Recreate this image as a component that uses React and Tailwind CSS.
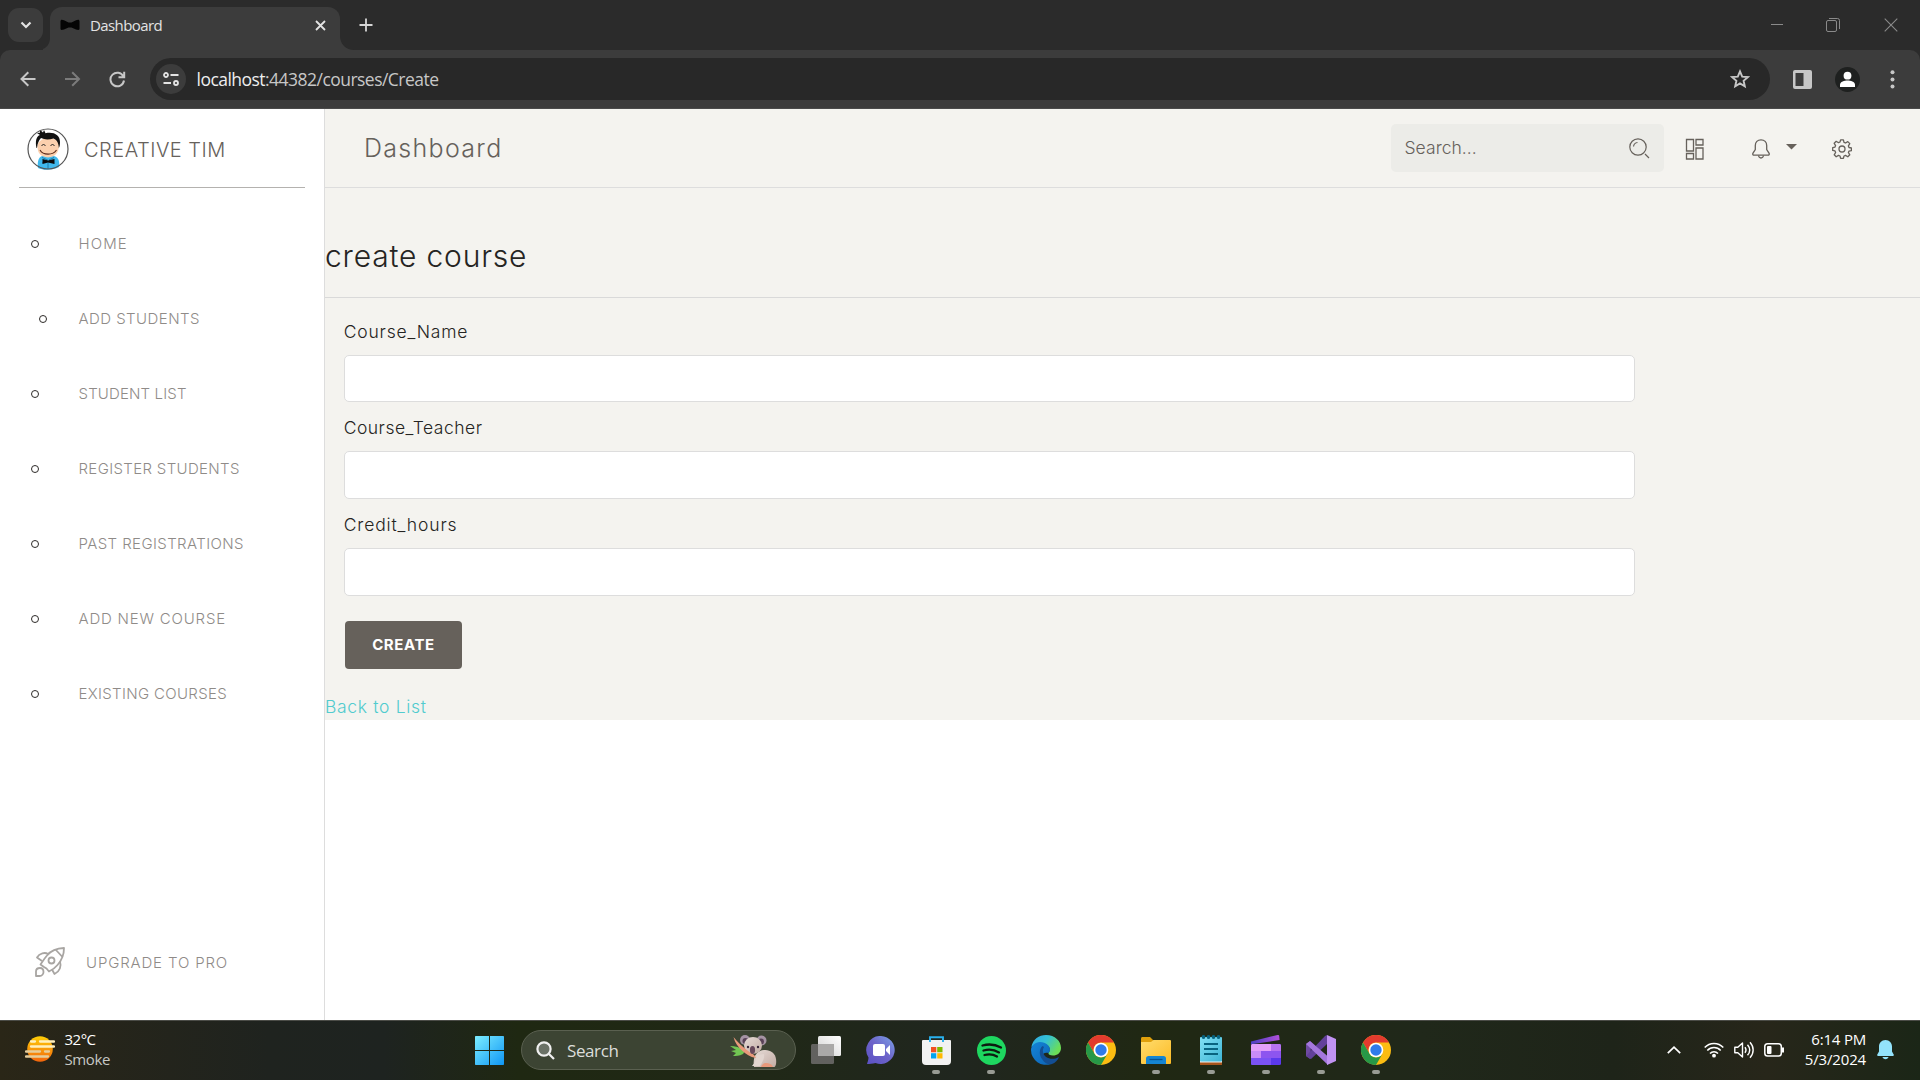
import React from 'react';

const menu = [
  { label: 'HOME', pad: 'pl-[31px]', gap: 'w-[47.500px]', spacing: 'tracking-[1.100px]' },
  { label: 'ADD STUDENTS', pad: 'pl-[39px]', gap: 'w-[39.500px]', spacing: 'tracking-[0.450px]' },
  { label: 'STUDENT LIST', pad: 'pl-[31px]', gap: 'w-[47.500px]', spacing: 'tracking-[0.150px]' },
  { label: 'REGISTER STUDENTS', pad: 'pl-[31px]', gap: 'w-[47.500px]', spacing: 'tracking-[0.350px]' },
  { label: 'PAST REGISTRATIONS', pad: 'pl-[31px]', gap: 'w-[47.500px]', spacing: 'tracking-[0.400px]' },
  { label: 'ADD NEW COURSE', pad: 'pl-[31px]', gap: 'w-[47.500px]', spacing: 'tracking-[0.800px]' },
  { label: 'EXISTING COURSES', pad: 'pl-[31px]', gap: 'w-[47.500px]', spacing: 'tracking-[0.330px]' },
];

const fields = [
  { label: 'Course_Name', spacing: 'tracking-[0.800px]' },
  { label: 'Course_Teacher', spacing: 'tracking-[0.480px]' },
  { label: 'Credit_hours', spacing: 'tracking-[0.850px]' },
];

function TabStrip() {
  return (
    <div className="flex h-[50px] bg-[#2b2b2b] pl-2">
      <button className="mt-2 flex h-[34px] w-[35px] items-center justify-center rounded-[11px] bg-[#3c3c3c]">
        <svg width="12" height="8" viewBox="0 0 12 8" fill="none" stroke="#e3e3e3" strokeWidth="2.2"><path d="M1.500 1.500 6 6l4.500-4.500" /></svg>
      </button>
      <div className="flex items-end">
        <svg width="7" height="12" viewBox="0 0 7 12"><path d="M7 0v12H-5C2 12 7 7 7 0Z" fill="#3c3c3c" /></svg>
      </div>
      <div className="mt-[7px] flex h-[43px] w-[290px] items-center rounded-t-[12px] bg-[#3c3c3c] pb-[7px] pl-[10px]">
        <svg width="20" height="12" viewBox="0 0 20 12"><path d="M.5 2.500C.5.500 2 .5 4 1.300L8.500 3.500h3L16 1.300c2-.8 3.500-.8 3.500 1.200v7c0 2-1.500 1.500-3.500.9L11.500 8.500h-3L4 10.400c-2 .6-3.500 1.100-3.500-.9Z" fill="#050505" /></svg>
        <span className="ml-[10px] text-[15px] leading-5 tracking-[-0.6px] text-[#e3e3e3]">Dashboard</span>
        <svg className="ml-auto mr-[14px]" width="11" height="11" viewBox="0 0 11 11" stroke="#e3e3e3" strokeWidth="1.8"><path d="m1 1 9 9M10 1l-9 9" /></svg>
      </div>
      <div className="flex items-end">
        <svg width="14" height="14" viewBox="0 0 14 14"><path d="M0 0v14h14C6 14 0 8 0 0Z" fill="#3c3c3c" /></svg>
      </div>
      <svg className="ml-[5px] mt-[18px]" width="14" height="14" viewBox="0 0 14 14" stroke="#d6d6d6" strokeWidth="1.8"><path d="M7 .5v13M.5 7h13" /></svg>
      <div className="ml-auto flex h-[50px] items-center pr-[22px]">
        <svg width="14" height="14" viewBox="0 0 14 14" stroke="#8a8a8a"><path d="M1 6.500h12" /></svg>
        <svg className="ml-[42px]" width="14" height="14" viewBox="0 0 14 14" fill="none" stroke="#8a8a8a"><rect x=".5" y="2.500" width="10" height="11" rx="1.500" /><path d="M3 .5h8.500a2 2 0 0 1 2 2V11" /></svg>
        <svg className="ml-[44px]" width="14" height="14" viewBox="0 0 14 14" stroke="#8a8a8a" strokeWidth="1.100"><path d="m.7.7 12.600 12.600M13.300.7.7 13.300" /></svg>
      </div>
    </div>
  );
}

function AddressBar() {
  return (
    <div className="bg-[#2b2b2b]">
      <div className="flex h-[59px] items-center rounded-t-[10px] border-b border-[#4a4a4a] bg-[#3c3c3c]">
        <svg className="ml-[19.500px]" width="16" height="16" viewBox="0 0 16 16" fill="none" stroke="#c7c7c7" strokeWidth="2"><path d="M15.500 8H2M8.300 1.200 1.500 8l6.800 6.800" /></svg>
        <svg className="ml-[29px]" width="16" height="16" viewBox="0 0 16 16" fill="none" stroke="#7b7b7b" strokeWidth="2"><path d="M0 8h13.500M7.200 1.200 14 8l-6.800 6.800" /></svg>
        <svg className="ml-[28.500px]" width="17" height="17" viewBox="0 0 17 17" fill="none" stroke="#c7c7c7" strokeWidth="2"><path d="M14.400 5.500A6.800 6.800 0 1 0 15 9.500M15.200.8v5.400H9.500" /></svg>
        <div className="ml-[24px] flex h-[42px] w-[1620px] items-center rounded-full bg-[#282828] pl-[6px]">
          <div className="flex h-[30px] w-[30px] items-center justify-center rounded-full bg-[#3c3c3c]">
            <svg width="16" height="14" viewBox="0 0 16 14" fill="none" stroke="#e3e3e3" strokeWidth="1.800"><circle cx="3" cy="3" r="2" /><path d="M7.500 3H15.500M.5 11H8" /><circle cx="13" cy="11" r="2" /></svg>
          </div>
          <span className="ml-[10.500px] whitespace-nowrap pb-px text-[17.500px] leading-6 tracking-[-0.530px] text-[#c7c7c7]"><span className="text-[#eeeeee]">localhost</span>:44382/courses/Create</span>
          <svg className="ml-auto mr-[20px]" width="20" height="20" viewBox="0 0 20 20" fill="none" stroke="#c7c7c7" strokeWidth="1.900"><path d="m10 2.400 2.200 5.200 5.600.5-4.200 3.700 1.200 5.500-4.800-2.900-4.800 2.900 1.200-5.500L2.200 8.100l5.600-.5Z" /></svg>
        </div>
        <svg className="ml-[23px]" width="19" height="19" viewBox="0 0 19 19"><rect width="19" height="19" rx="2" fill="#c7c7c7" /><path d="M2.500 3h8v13h-8Z" fill="#3c3c3c" /></svg>
        <svg className="ml-[23px]" width="25" height="25" viewBox="0 0 25 25"><circle cx="12.500" cy="12.500" r="12.500" fill="#1e201f" /><circle cx="12.500" cy="8.700" r="3.900" fill="#fff" /><path d="M5 20v-2.200c0-3 4.500-4.300 7.500-4.300s7.500 1.300 7.500 4.300V20Z" fill="#fff" /></svg>
        <svg className="ml-[30px]" width="5" height="19" viewBox="0 0 5 19" fill="#c7c7c7"><circle cx="2.500" cy="2.300" r="2" /><circle cx="2.500" cy="9.500" r="2" /><circle cx="2.500" cy="16.600" r="2" /></svg>
      </div>
    </div>
  );
}

function Avatar() {
  return (
    <svg width="42" height="42" viewBox="0 0 42 42">
      <circle cx="21" cy="21" r="20" fill="#fff" />
      <path d="M11 40c-1-7 1-11 4-12h12c4 1 6 5 5 11-6 3-15 4-21 1Z" fill="#3fb9ee" />
      <path d="M15 29.500 20.500 32 15 35M27 29.500 22 32l5 3" stroke="#1c6b95" strokeWidth=".8" fill="none" />
      <path d="M21 33v8" stroke="#1c6b95" strokeWidth=".8" />
      <path d="M10.500 17c-.5 7 2.500 12 10.500 12.500C29.500 29 32.500 23 32 15 30 9 13 8 10.500 17Z" fill="#fbd0ae" />
      <path d="M9.500 20C8 13 9.500 8 13 7l-3-2 3-.3L13 2l3 2.500L17 2l1.500 3.200C27 3.500 33 7 33 14c0 3-.4 5-1.200 6 0-4-1.500-8-5.300-9.500-5 1.300-9 1.200-12.500-.5-2 2-3.500 5-4 10Z" fill="#111" />
      <path d="m14.500 18 2-2 2 2M23.500 18l2-2 2 2" stroke="#222" fill="none" />
      <path d="M13 22c3 5.500 13 5.500 16.500 0" stroke="#5b2a1a" strokeWidth="1.100" fill="none" />
      <path d="M15.500 31 21 32.500l6.500-1.500v5L21 34.500 15.500 36Z" fill="#0a0a0a" />
      <circle cx="21" cy="21" r="20" fill="none" stroke="#555" strokeWidth="1.200" />
    </svg>
  );
}

function Rocket() {
  return (
    <svg width="30" height="30" viewBox="0 0 30 30" fill="none" stroke="#a8a5a2" strokeWidth="1.800" strokeLinejoin="round">
      <path d="M29 1c-8 .3-13 2.500-17 7.500C9 12 7 15.500 5.500 17.500L9 20l2.500 1.500L14 24.500c3.500-1.500 6-3.500 8.500-6.500C27 13 29 8 29 1Z" />
      <path d="M20.500 2.500 27.500 10M13 7C10 5 4.500 6 2 10.500l5 3.500M25 14.500c1.500 4.500 0 10-5.500 12.500l-2.500-4.500" />
      <circle cx="16.500" cy="13.500" r="3" />
      <path d="M1 29v-4.500c0-2.500 2-3.500 4-3.500 2.500 0 3.500 2 3.500 4S7 29 4.500 29Z" />
    </svg>
  );
}

function Sidebar() {
  return (
    <aside className="flex h-full w-[325px] flex-col border-r border-[#dddddd] bg-white font-['Inter',sans-serif] font-light">
      <div className="ml-[19px] mr-[19px] flex h-[79px] items-center border-b border-[#b4b2af] pl-[8px] pt-px">
        <Avatar />
        <span className="ml-[15px] whitespace-nowrap pt-[3px] text-[20px] leading-6 tracking-[0.500px] text-[#66615b]">CREATIVE TIM</span>
      </div>
      <nav className="mt-[17px]">
        {menu.map((m) => (
          <a key={m.label} className={'flex h-[75px] items-center ' + m.pad}>
            <span className={m.gap}><span className="mt-[2px] block h-[8px] w-[8px] rounded-full border-[1.500px] border-[#2d2a28]" /></span>
            <span className={'whitespace-nowrap pt-[3px] text-[15px] leading-5 text-[#8f8b88] ' + m.spacing}>{m.label}</span>
          </a>
        ))}
      </nav>
      <a className="mb-[43px] ml-[35px] mt-auto flex h-[30px] items-center">
        <Rocket />
        <span className="ml-[21px] whitespace-nowrap pt-px text-[15px] leading-5 tracking-[0.850px] text-[#8f8b88]">UPGRADE TO PRO</span>
      </a>
    </aside>
  );
}

function Navbar() {
  return (
    <header className="flex h-[79px] items-center border-b border-[#dddddd]">
      <h1 className="ml-[39px] text-[25px] font-light leading-8 tracking-[1.300px] text-[#66615b]">Dashboard</h1>
      <div className="ml-auto flex h-[48px] w-[273px] items-center rounded-[5px] bg-[#ecece8] pl-[13.500px]">
        <span className="pb-px text-[17.500px] font-light leading-6 tracking-[0.050px] text-[#66615b]">Search...</span>
        <svg className="ml-auto mr-[14px]" width="21" height="21" viewBox="0 0 21 21" fill="none" stroke="#66615b" strokeWidth="1.200"><circle cx="9" cy="9" r="8.200" /><path d="m16 16 4 4M4.500 8.500c.3-2.200 1.800-3.700 4-4" /></svg>
      </div>
      <svg className="ml-[21px] mt-px" width="20" height="22" viewBox="0 0 20 22" fill="none" stroke="#66615b" strokeWidth="1.300"><path d="M1.500 1.500h7V13h-7ZM11 1.500h7V7h-7ZM1.500 15.500h7V21h-7ZM11 10h7v11h-7Z" /></svg>
      <svg className="ml-[47px] mt-[2px]" width="18" height="20" viewBox="0 0 18 20" fill="none" stroke="#66615b" strokeWidth="1.300"><path d="M9 .8C5.500.8 3.300 3 3.300 6.500v4L1 14.200c-.6 1 0 2 1 2h14c1 0 1.600-1 1-2l-2.300-3.700v-4C14.700 3 12.500.8 9 .8Z" /><path d="M6.500 16.500c.3 1.600 1.200 2.500 2.500 2.500s2.200-.9 2.500-2.500" /></svg>
      <svg className="mb-[3px] ml-[16px]" width="11" height="6" viewBox="0 0 11 6"><path d="M0 0h11L5.500 5.500Z" fill="#66615b" /></svg>
      <svg className="ml-[35px] mr-[68px] mt-[2px]" width="20" height="20" viewBox="-10 -10 20 20" fill="none" stroke="#66615b" strokeWidth="1.300" strokeLinejoin="round">
        <circle r="3" />
        <path d="M-1.400-9.200h2.800L2-6.700l1.500.7 2.300-1.400 2 2-1.400 2.300.6 1.600 2.400.5v2.600l-2.400.5L6.400 3.500l1.400 2.300-2 2L3.500 6.400 2 7l-.6 2.300h-2.800L-2 7l-1.500-.6-2.300 1.400-2-2 1.400-2.300L-7 1.900l-2.300-.5v-2.800L-7-1.900l.6-1.500-1.400-2.300 2-2L-3.500-6.300-2-7Z" />
      </svg>
    </header>
  );
}

function CourseForm() {
  return (
    <section className="flex h-[532px] flex-col font-light">
      <h2 className="mt-[48px] text-[30px] leading-10 tracking-[0.820px] text-[#252422]">create course</h2>
      <hr className="mt-[21px] border-t border-[#d9d9d9]" />
      <form className="ml-[18.750px] mt-[22px]">
        {fields.map((f) => (
          <label key={f.label} className="block h-[96.600px]">
            <span className={'block pt-[1.500px] text-[17.500px] leading-5 text-[#252422] ' + f.spacing}>{f.label}</span>
            <input className="mt-[13.400px] block h-[47.600px] w-[1291px] rounded-[5px] border border-[#dddddd] bg-white" />
          </label>
        ))}
        <button type="button" className="ml-[1.250px] mt-[11px] flex h-[48px] w-[117px] items-center justify-center rounded-[4px] bg-[#66615b] text-[15px] font-bold leading-5 tracking-[0.600px] text-white">CREATE</button>
      </form>
      <a className="mt-[28px] text-[17.500px] leading-5 tracking-[0.680px] text-[#51cbce]">Back to List</a>
    </section>
  );
}

function Koala() {
  return (
    <svg width="47" height="32" viewBox="0 0 47 32">
      <defs>
        <linearGradient id="fur" x1="0" y1="0" x2="1" y2="1"><stop offset="0" stopColor="#e6dbd6" /><stop offset="1" stopColor="#c2aca4" /></linearGradient>
      </defs>
      <circle cx="15" cy="5" r="5" fill="#a593a3" /><circle cx="31.500" cy="5.500" r="5" fill="#a593a3" />
      <circle cx="15.500" cy="6" r="3" fill="#594257" /><circle cx="31" cy="6.500" r="3" fill="#594257" />
      <path d="M30 16c8-3 15 1 16 8 .5 4 0 7-1.500 8H24c-1-7 0-13 6-16Z" fill="url(#fur)" />
      <path d="M0 11c5 0 10 1 15 5l-2 3c-4 2-7 2-10 2l3-3-5-2 5-1Z" fill="#72c653" />
      <ellipse cx="23" cy="10.500" rx="9" ry="8.500" fill="url(#fur)" />
      <path d="M3.500 2c4 5 9 10 16 15 4 2 6 4 6.500 6-6-1-10-4-13.500-7C8 12 5 8 3.500 2ZM36 28c3 0 6 1 7 4H31c1-3 3-4 5-4Z" fill="#e8997b" />
      <path d="M22 31c3-3 4-7 5-11l7-1c1 4-2 9-4 12Z" fill="#e2d5cf" />
      <ellipse cx="22.500" cy="15" rx="2.600" ry="4" fill="#68495b" />
      <circle cx="18" cy="12" r="1.200" fill="#38273a" /><circle cx="28" cy="12" r="1.200" fill="#38273a" />
    </svg>
  );
}

function Chrome() {
  return (
    <svg width="30" height="30" viewBox="0 0 30 30">
      <circle cx="15" cy="15" r="15" fill="#fbbc12" />
      <path d="M2 7.500A15 15 0 0 1 28 7.500H15a7.500 7.500 0 0 0-6.500 11.300Z" fill="#e33b2e" />
      <path d="M2 7.500 8.500 18.800A7.500 7.500 0 0 0 21.500 18.800L15 30A15 15 0 0 1 2 7.500Z" fill="#279847" />
      <circle cx="15" cy="15" r="7.300" fill="#fff" /><circle cx="15" cy="15" r="5.700" fill="#2f7bea" />
    </svg>
  );
}

const apps = [
  {
    name: 'taskview',
    icon: (
      <svg width="30" height="28" viewBox="0 0 30 28"><defs><linearGradient id="tv" x1="1" y1="0" x2="0" y2="1"><stop stopColor="#fff" /><stop offset="1" stopColor="#d2d2d2" /></linearGradient></defs><rect x="7" width="23" height="20" rx="1.500" fill="url(#tv)" /><rect y="8" width="23" height="20" rx="1.500" fill="#6f6c6c" opacity=".85" /><rect x="7" y="8" width="16" height="12" fill="#aaa9a8" /></svg>
    ),
  },
  {
    name: 'chat',
    icon: (
      <svg width="30" height="28" viewBox="0 0 30 28"><defs><linearGradient id="chat" x1="1" y1="0" x2="0" y2="1"><stop stopColor="#7ba2e8" /><stop offset=".5" stopColor="#6d63c9" /><stop offset="1" stopColor="#5a50c4" /></linearGradient></defs><path d="M15 0a14 14 0 1 1-5.500 27c-3 .8-6 1-8.500 1 .5-2 1.500-4 1.500-6.500A14 14 0 0 1 15 0Z" fill="url(#chat)" /><rect x="7" y="8" width="12" height="12" rx="2" fill="#fff" /><path d="m20 13 4-4v10l-4-4Z" fill="#fff" /></svg>
    ),
  },
  {
    name: 'store',
    open: true,
    icon: (
      <svg width="29" height="29" viewBox="0 0 29 29"><path d="M1 4h27a1 1 0 0 1 1 1v20a4 4 0 0 1-4 4H4a4 4 0 0 1-4-4V5a1 1 0 0 1 1-1Z" fill="#f2f2f2" /><path d="M8 6V1.200h13V6" fill="none" stroke="#29b1ee" strokeWidth="1.900" /><path d="M9 11h5.300v5.300H9Z" fill="#f25022" /><path d="M15.200 11h5.300v5.300h-5.300Z" fill="#7fba00" /><path d="M9 17.200h5.300v5.300H9Z" fill="#00a4ef" /><path d="M15.200 17.200h5.300v5.300h-5.300Z" fill="#ffb900" /></svg>
    ),
  },
  {
    name: 'spotify',
    open: true,
    icon: (
      <svg width="29" height="29" viewBox="0 0 29 29"><circle cx="14.500" cy="14.500" r="14.500" fill="#1ed760" /><path d="M5.500 9.500c6-1.700 13-1 18.500 2M6.500 14.500c5-1.400 11-.8 15.500 1.900M7.500 19c4-1 9-.6 12.500 1.500" fill="none" stroke="#0d1b10" strokeWidth="2.300" strokeLinecap="round" /></svg>
    ),
  },
  {
    name: 'edge',
    icon: (
      <svg width="30" height="30" viewBox="0 0 30 30"><defs><linearGradient id="e1" x1="0" y1="0" x2="1" y2=".5"><stop stopColor="#2fa7e4" /><stop offset=".5" stopColor="#34c1d5" /><stop offset="1" stopColor="#6bde57" /></linearGradient><linearGradient id="e2" x1="0" y1="0" x2="1" y2="1"><stop stopColor="#1485d8" /><stop offset="1" stopColor="#0d63b4" /></linearGradient></defs><path d="M.3 12C2 4 8 0 15 0c9 0 15 6 15 13 0 5-4 7.500-8 7.500-3 0-5-1-4.500-2.500.6-1 1.300-2 1.300-3.500C18.800 9 8 5 .3 12Z" fill="url(#e1)" /><path d="M0 15c0-4 4-8 9-8 6 0 10 4 10 7.500 0 1.500-.8 2.500-1.500 3.500-3-1-6 0-6 3 0 4 4 8 8.500 8A15 15 0 0 1 0 15Z" fill="url(#e2)" /><path d="M11.500 11C8 14 8 20 11 24c3 5 8 6 10 5 3-1 6-4 7-7-7 4-15 1-16-5-.3-2 .1-3.500 1-5Z" fill="#134e93" /></svg>
    ),
  },
  { name: 'chrome', icon: <Chrome /> },
  {
    name: 'explorer',
    open: true,
    icon: (
      <svg width="30" height="27" viewBox="0 0 30 27"><defs><linearGradient id="fo" x1="0" y1="0" x2="1" y2="1"><stop stopColor="#ffdc6d" /><stop offset="1" stopColor="#fcbb25" /></linearGradient></defs><path d="M0 1.500C0 .6.600 0 1.500 0H9l3.500 3.500V9H0Z" fill="#dfa00c" /><path d="M0 5h10l2.500-2H29a1 1 0 0 1 1 1v22a1 1 0 0 1-1 1H1a1 1 0 0 1-1-1Z" fill="url(#fo)" /><path d="M5 27v-5.500c0-1.500 1-2.500 2.500-2.500h15c1.500 0 2.500 1 2.500 2.500V27Z" fill="#1585d2" /><path d="M8.500 22.500h13" stroke="#075392" strokeWidth="1.300" /></svg>
    ),
  },
  {
    name: 'notepad',
    open: true,
    icon: (
      <svg width="22" height="30" viewBox="0 0 22 30"><defs><linearGradient id="np" x1="0" y1="0" x2="1" y2="1"><stop stopColor="#83e1f4" /><stop offset="1" stopColor="#3eb5d6" /></linearGradient></defs><path d="M0 24h22v6H0Z" fill="#a7541b" /><path d="M0 24h22v3.500H0Z" fill="#efefef" /><rect y="2" width="22" height="24.500" rx="1" fill="url(#np)" /><path d="M4 9h14M4 14h14M4 19h14" stroke="#08637f" strokeWidth="1.800" /><g fill="#08637f"><circle cx="3.500" cy="2" r="1.900" /><circle cx="8.500" cy="2" r="1.900" /><circle cx="13.500" cy="2" r="1.900" /><circle cx="18.500" cy="2" r="1.900" /></g></svg>
    ),
  },
  {
    name: 'clipchamp',
    open: true,
    icon: (
      <svg width="30" height="30" viewBox="0 0 30 30"><defs><linearGradient id="c1" x1="0" y1="0" x2="1" y2="0"><stop stopColor="#4a3fc4" /><stop offset="1" stopColor="#b050d8" /></linearGradient></defs><path d="M0 6.500 26.500 0c1-.2 1.500.3 1.700 1l.4 4L2 9H0Z" fill="url(#c1)" /><rect y="9" width="30" height="21" rx="1.500" fill="#5b39ec" /><path d="M1.500 9H20v7H0v-5.500C0 9.700.700 9 1.500 9Z" fill="#e2a0fa" /><path d="M20 9h8.500c.8 0 1.500.7 1.500 1.500V16H20Z" fill="#b673f0" /><path d="M0 16h10v7H0Z" fill="#c98cf8" /><path d="M10 16h20v7H10Z" fill="#8d55ef" /><path d="M0 23h20v7H1.500C.700 30 0 29.300 0 28.500Z" fill="#7b52f4" /></svg>
    ),
  },
  {
    name: 'visualstudio',
    open: true,
    icon: (
      <svg width="30" height="30" viewBox="0 0 30 30"><path d="m0 9 4-3v18l-4-3Z" fill="#6f4aa3" /><path d="M4 6 9 10.500 5 15l4 4.500L4 24Z" fill="#5b3a8c" /><path d="M21 0v9L5 24l-5-3L19 1Z" fill="#62409a" /><path d="M4 6 22 21.500V30L0 9Z" fill="#a477dc" /><path d="M21 0 30 4v22l-9 4Z" fill="#c193f3" /></svg>
    ),
  },
  { name: 'chrome-profile', open: true, icon: <Chrome /> },
];

function Taskbar() {
  return (
    <footer className="flex h-[60px] items-center border-t border-[#4b4c47] bg-[linear-gradient(90deg,#2a2617_0%,#1f231f_14%,#1e2320_20%,#1f2812_27%,#202817_40%,#20261f_50%,#202813_60%,#20281a_74%,#1e2419_84%,#27261a_92%,#1b2617_100%)] text-white">
      <div className="flex w-[475px] items-center pb-[3px] pl-[25px]">
        <svg width="30" height="26" viewBox="0 0 30 26"><defs><linearGradient id="sun" x1="0" y1="0" x2="0" y2="1"><stop stopColor="#ffcf07" /><stop offset="1" stopColor="#f2640c" /></linearGradient></defs><circle cx="15" cy="13" r="12.800" fill="url(#sun)" /><path d="M6 5.500h4M15 5.500h14M6 10.500h23" stroke="#fff0bd" strokeWidth="2.300" strokeLinecap="round" /><path d="M1 15.500h14M20 15.500h4M1 20.500h22" stroke="#e6cd9b" strokeWidth="2.300" strokeLinecap="round" /></svg>
        <div className="ml-[9.500px] flex flex-col text-[15px] leading-5">
          <span className="tracking-[-0.500px]">32°C</span>
          <span className="tracking-[-0.400px] text-[#c7c8c5]">Smoke</span>
        </div>
      </div>
      <svg width="29" height="29" viewBox="0 0 29 29"><defs><linearGradient id="win" x1="0" y1="0" x2="1" y2="1"><stop stopColor="#7cedff" /><stop offset="1" stopColor="#0f96f5" /></linearGradient></defs><path d="M1 0h13v14H0V1c0-.6.400-1 1-1ZM15 0h13c.6 0 1 .4 1 1v13H15ZM0 15h14v14H1c-.6 0-1-.4-1-1ZM15 15h14v13c0 .6-.4 1-1 1H15Z" fill="url(#win)" /></svg>
      <div className="mb-px ml-[17px] flex h-[40px] w-[275px] items-center rounded-full border border-[#5a6050] bg-[#3c4433] pl-[14px]">
        <svg width="19" height="19" viewBox="0 0 19 19" fill="#6b7267" stroke="#f0f0f0" strokeWidth="2.200"><circle cx="8" cy="8" r="6.600" /><path d="m13 13 5 5" /></svg>
        <span className="ml-[12px] pt-px text-[17px] leading-6 tracking-[-0.400px] text-[#dcdedb]">Search</span>
        <span className="ml-auto mr-[18px] mt-px"><Koala /></span>
      </div>
      <div className="ml-[2.750px] flex">
        {apps.map((a) => (
          <div key={a.name} className="flex h-[59px] w-[55px] flex-col items-center">
            <div className="flex h-[49px] items-center pt-[9px]">{a.icon}</div>
            {a.open && <span className="h-[4px] w-[8px] rounded-full bg-[#989b94]" />}
          </div>
        ))}
      </div>
      <div className="ml-auto flex items-center pb-px pr-[26px]">
        <svg width="14" height="8" viewBox="0 0 14 8" fill="none" stroke="#fff" strokeWidth="1.700"><path d="m.8 7.200 6.200-6 6.200 6" /></svg>
        <svg className="ml-[23px]" width="20" height="16" viewBox="0 0 20 16" fill="none" stroke="#fff" strokeWidth="1.500"><path d="M.7 5.500c5-5.500 13.600-5.500 18.600 0M3.300 8.500c3.600-4 9.800-4 13.400 0M6 11.500c2.200-2.500 5.800-2.500 8 0" /><circle cx="10" cy="13.700" r="1.900" fill="#fff" stroke="none" /></svg>
        <svg className="ml-[10px]" width="20" height="18" viewBox="0 0 20 18" fill="none" stroke="#fff" strokeWidth="1.400" strokeLinejoin="round"><path d="M.8 6.300h3L8.500 2v14l-4.700-4.200h-3ZM11 6.200c1.200 1.700 1.200 4 0 5.600M13.500 3.700c2.700 3.200 2.700 7.400 0 10.600M16 1.200c4.200 4.600 4.200 11 0 15.600" /></svg>
        <svg className="ml-[10px]" width="20" height="14" viewBox="0 0 20 14" fill="none" stroke="#fff" strokeWidth="1.500"><rect x=".8" y=".8" width="16.500" height="12.200" rx="2.800" /><rect x="3" y="3" width="4.500" height="8" rx="1" fill="#fff" stroke="none" /><path d="M19 4.500v5" strokeWidth="2" /></svg>
        <div className="ml-[20px] flex w-[62px] flex-col items-end whitespace-nowrap pb-[3px] text-[15px] leading-5">
          <span className="tracking-[-0.200px]">6:14 PM</span>
          <span className="tracking-[-0.150px]">5/3/2024</span>
        </div>
        <svg className="ml-[11px]" width="17" height="20" viewBox="0 0 17 20" fill="#93e3fb"><path d="M8.500 0C4.500 0 2 3 2 6.500v5L.3 14.500c-.4.800 0 1.500.8 1.500h14.800c.8 0 1.200-.7.800-1.500L15 11.500v-5C15 3 12.500 0 8.500 0Z" /><path d="M5.500 17h6c-.4 1.400-1.500 2.200-3 2.200S5.900 18.400 5.500 17Z" /></svg>
      </div>
    </footer>
  );
}

export default function App() {
  return (
    <div className="flex h-[1080px] w-[1920px] flex-col overflow-hidden bg-white font-['Open_Sans','Noto_Sans',sans-serif]">
      <TabStrip />
      <AddressBar />
      <div className="flex h-[911px]">
        <Sidebar />
        <main className="h-[611px] flex-1 bg-[#f4f3ef] font-['Inter',sans-serif]">
          <Navbar />
          <CourseForm />
        </main>
      </div>
      <Taskbar />
    </div>
  );
}
